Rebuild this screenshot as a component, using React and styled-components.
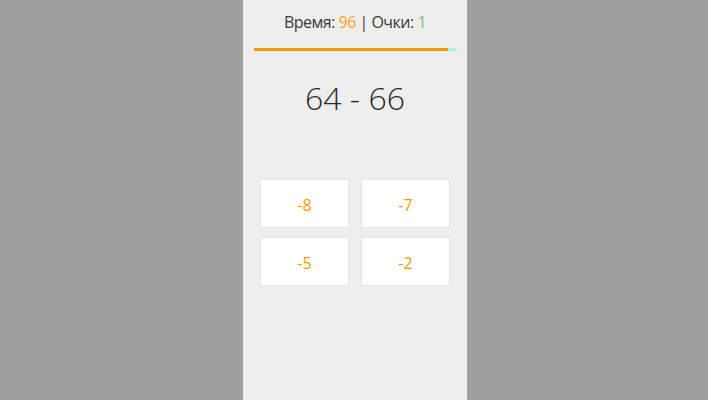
import React from "react";
import styled, { createGlobalStyle } from "styled-components";

const Global = createGlobalStyle`
  html, body { margin: 0; padding: 0; height: 100%; background: #9e9e9e; }
  #root { height: 100%; }
  * { box-sizing: border-box; }
`;

const Stage = styled.div`
  display: flex;
  justify-content: center;
  padding-left: 2px;
  height: 400px;
  background: #9e9e9e;
`;

const Panel = styled.div`
  width: 224px;
  height: 100%;
  background: #eeeeee;
  display: flex;
  flex-direction: column;
  align-items: center;
  font-family: "Open Sans", "Noto Sans", sans-serif;
`;

const Header = styled.div`
  margin-top: 11px;
  height: 22px;
  line-height: 22px;
  font-size: 16px;
  letter-spacing: -0.5px;
  color: #3a3a3a;
`;

const Val = styled.span`
  color: ${(p) => p.$color};
`;

const Track = styled.div`
  margin-top: 15px;
  width: 203px;
  height: 3px;
  background: #b2ebf2;
  display: flex;
`;

const Fill = styled.div`
  height: 100%;
  background: #ff9800;
`;

const Question = styled.div`
  margin-top: 25px;
  font-size: 32px;
  font-weight: 300;
  line-height: 44px;
  color: #2a2a2a;
`;

const Grid = styled.div`
  margin-top: 59px;
  display: grid;
  grid-template-columns: 89px 89px;
  column-gap: 12px;
  row-gap: 9px;
`;

const Answer = styled.button`
  height: 49px;
  background: #ffffff;
  border: 1px solid #e6e6e6;
  color: #ff9800;
  font-family: "Open Sans", "Noto Sans", sans-serif;
  font-size: 16px;
  padding: 0;
  padding-top: 2px;
  cursor: pointer;
`;

export default function App() {
  const answers = ["-8", "-7", "-5", "-2"];
  return (
    <>
      <Global />
      <Stage>
        <Panel>
          <Header>
            Время: <Val $color="#ffa126">96</Val> | Очки: <Val $color="#7cc47c">1</Val>
          </Header>
          <Track>
            <Fill style={{ width: `${(96 / 100) * 100}%` }} />
          </Track>
          <Question>64 - 66</Question>
          <Grid>
            {answers.map((a) => (
              <Answer key={a}>{a}</Answer>
            ))}
          </Grid>
        </Panel>
      </Stage>
    </>
  );
}
